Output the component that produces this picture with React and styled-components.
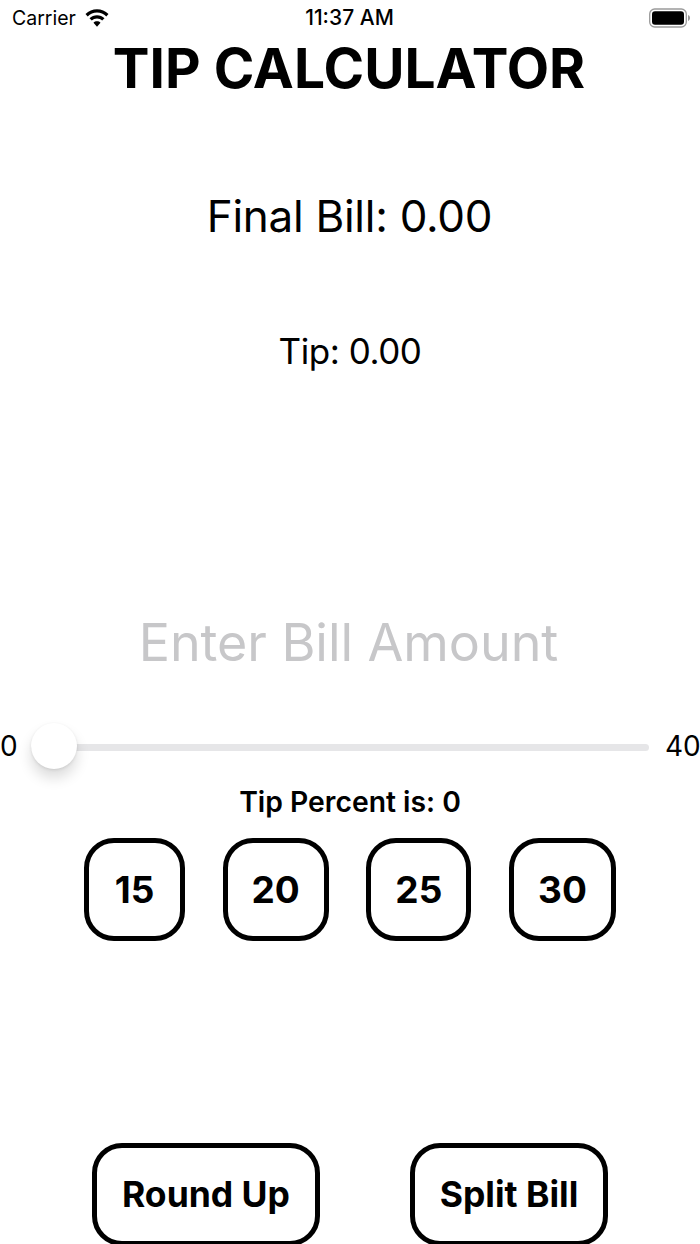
import React from "react";
import styled, { createGlobalStyle } from "styled-components";

const Global = createGlobalStyle`
  html, body { margin: 0; padding: 0; background: #fff; overflow: hidden; }
  body { font-family: Inter, "Liberation Sans", sans-serif; color: #000; }
`;

const Page = styled.div`
  width: 700px;
  height: 1244px;
  overflow: hidden;
  display: flex;
  flex-direction: column;
  align-items: center;
  & > * {
    flex-shrink: 0;
  }
`;

const StatusBar = styled.div`
  width: 100%;
  height: 36px;
  box-sizing: border-box;
  padding: 0 12px;
  display: grid;
  grid-template-columns: 1fr auto 1fr;
  align-items: center;
  font-size: 19.5px;
  line-height: 36px;
  color: #000;
`;

const Carrier = styled.div`
  display: flex;
  align-items: center;
  gap: 8px;
`;

const Clock = styled.div`
  font-size: 21px;
  font-weight: 500;
  margin-right: 1px;
`;

const BatterySlot = styled.div`
  display: flex;
  justify-content: flex-end;
  margin-right: -3px;
`;

const Title = styled.h1`
  margin: 0 2px 0 0;
  height: 64px;
  line-height: 64px;
  font-size: 55px;
  font-weight: 700;
  white-space: nowrap;
`;

const FinalBill = styled.div`
  margin: 88px 1px 0 0;
  height: 56px;
  line-height: 56px;
  font-size: 44px;
  font-weight: 400;
  letter-spacing: -0.27px;
`;

const TipLine = styled.div`
  margin-top: 85px;
  height: 44px;
  line-height: 44px;
  font-size: 35px;
  font-weight: 400;
  letter-spacing: -0.45px;
`;

const BillInput = styled.div`
  margin: 238px 3px 0 0;
  height: 64px;
  line-height: 64px;
  font-size: 52px;
  font-weight: 400;
  letter-spacing: -0.06px;
  color: #c7c7c9;
`;

const SliderRow = styled.div`
  margin-top: 48px;
  width: 100%;
  height: 46px;
  display: flex;
  align-items: center;
  font-size: 28px;
  font-weight: 400;
`;

const SliderEnd = styled.span`
  width: ${(p) => p.$w}px;
  flex: none;
`;

const Track = styled.div`
  flex: 1;
  height: 7px;
  border-radius: 4px;
  background: #e6e6e8;
  position: relative;
  margin: 2px 16px 0 14px;
`;

const Thumb = styled.div`
  position: absolute;
  left: 0;
  top: -21px;
  width: 46px;
  height: 46px;
  border-radius: 50%;
  background: #fff;
  box-shadow: 0 9px 14px rgba(0, 0, 0, 0.14), 0 1px 3px rgba(0, 0, 0, 0.1);
`;

const Percent = styled.div`
  margin-top: 16px;
  height: 34px;
  line-height: 34px;
  font-size: 28.3px;
  font-weight: 600;
`;

const Presets = styled.div`
  margin-top: 19px;
  display: flex;
  gap: 37.67px;
`;

const Outlined = styled.div`
  box-sizing: border-box;
  width: ${(p) => p.$w}px;
  height: 103px;
  border: 5px solid #000;
  border-radius: 30px;
  display: flex;
  align-items: center;
  justify-content: center;
  font-size: ${(p) => p.$size}px;
  font-weight: 700;
`;

const Actions = styled.div`
  margin-top: 202px;
  display: flex;
  gap: 90px;
`;

const presets = [
  ["15", 101],
  ["20", 106],
  ["25", 105],
  ["30", 107],
];

const Wifi = () => (
  <svg width="26" height="19" viewBox="0 0 26 19" fill="#000">
    <path d="M13 3.6c3.5 0 6.8 1.4 9.3 3.8l2.2-2.3C21.4 2 17.3.2 13 .2S4.6 2 1.5 5.1l2.2 2.3C6.2 5 9.500 3.600 13 3.600z" />
    <path d="M13 9.500c2 0 3.800.8 5.200 2.100l2.300-2.300C18.500 7.300 15.800 6.200 13 6.200S7.500 7.300 5.500 9.300l2.300 2.300C9.200 10.300 11 9.500 13 9.500z" />
    <path d="M13 12.300c-1.400 0-2.600.5-3.500 1.400l3.500 4.100 3.500-4.100c-.9-.9-2.100-1.400-3.500-1.400z" />
  </svg>
);

const Battery = () => (
  <svg width="42" height="20" viewBox="0 0 42 20">
    <rect x="0.700" y="1" width="36.600" height="18" rx="5" fill="none" stroke="#9a9a9a" strokeWidth="1.300" />
    <rect x="3" y="3.200" width="32" height="13.600" rx="3" fill="#000" />
    <path d="M39 7v6c1.300-.4 2-1.600 2-3s-.7-2.600-2-3z" fill="#9a9a9a" />
  </svg>
);

export default function App() {
  return (
    <Page>
      <Global />
      <StatusBar>
        <Carrier>
          Carrier
          <Wifi />
        </Carrier>
        <Clock>11:37 AM</Clock>
        <BatterySlot>
          <Battery />
        </BatterySlot>
      </StatusBar>
      <Title>TIP CALCULATOR</Title>
      <FinalBill>Final Bill: 0.00</FinalBill>
      <TipLine>Tip: 0.00</TipLine>
      <BillInput>Enter Bill Amount</BillInput>
      <SliderRow>
        <SliderEnd $w={17}>0</SliderEnd>
        <Track>
          <Thumb />
        </Track>
        <SliderEnd $w={35}>40</SliderEnd>
      </SliderRow>
      <Percent>Tip Percent is: 0</Percent>
      <Presets>
        {presets.map(([label, w]) => (
          <Outlined key={label} $w={w} $size={37}>
            {label}
          </Outlined>
        ))}
      </Presets>
      <Actions>
        <Outlined $w={228} $size={35.5}>Round Up</Outlined>
        <Outlined $w={198} $size={35.5}>Split Bill</Outlined>
      </Actions>
    </Page>
  );
}
